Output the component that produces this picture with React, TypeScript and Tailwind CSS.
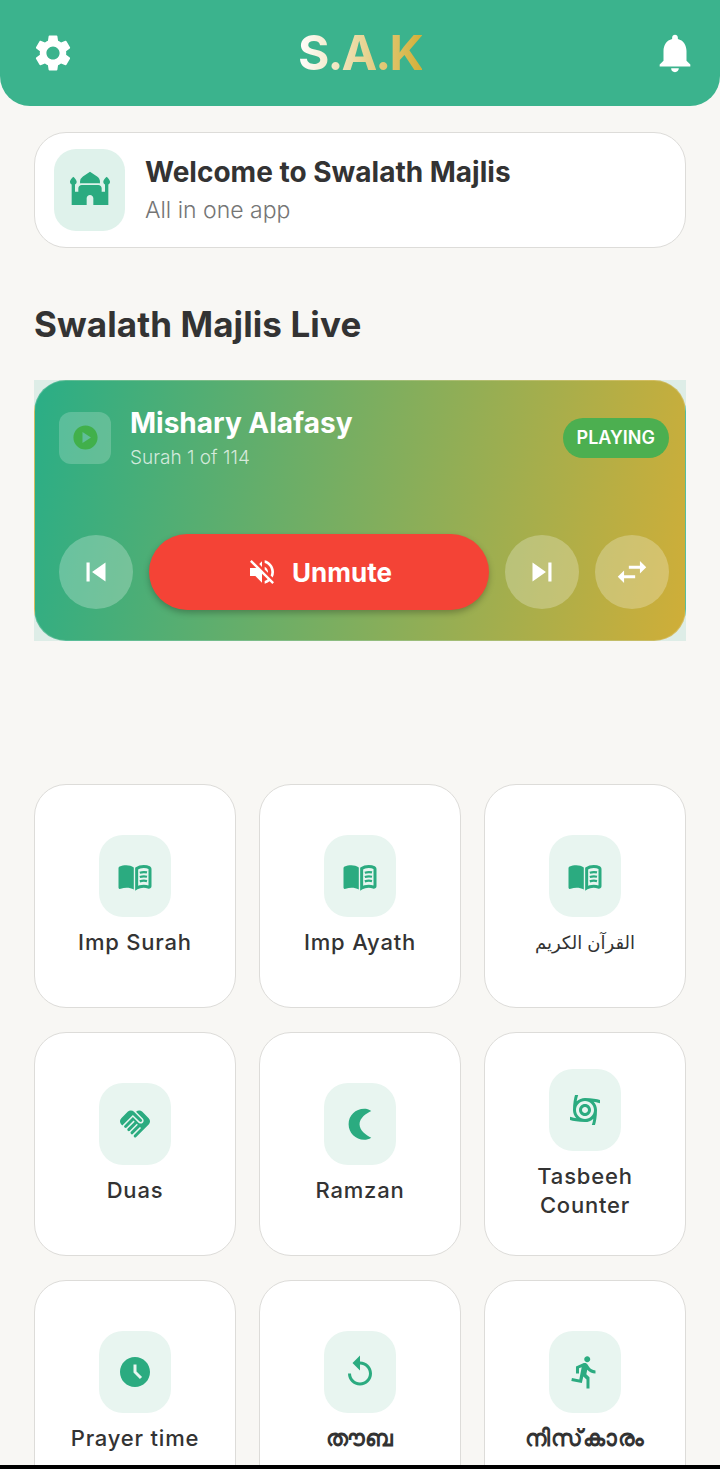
import type { ReactNode } from 'react'
import {
  MdAccessTimeFilled,
  MdCyclone,
  MdDirectionsRun,
  MdHandshake,
  MdMosque,
  MdNotifications,
  MdPlayCircle,
  MdReplay,
  MdSettings,
  MdSkipNext,
  MdSkipPrevious,
  MdSwapHoriz,
  MdVolumeOff,
} from 'react-icons/md'

const iconClass = 'h-[36px] w-[36px] text-[#2bab80]'
const latinLabel = 'text-[22px] font-medium tracking-[0.8px]'
const malayalamLabel = 'text-[23px] font-bold tracking-[0.8px]'
const arabicLabel = 'text-[18px] font-normal'

function BookIcon() {
  return (
    <svg viewBox="0 0 24 24" fill="currentColor" className={iconClass}>
      <path d="M11.2 6.3C9.8 5.3 8 4.8 6.2 4.8c-1.6 0-3.2.3-4.4.9-.5.3-.8.7-.8 1.3v12.6c0 .8.8 1.2 1.5.9 1.2-.5 2.6-.7 3.9-.7 1.7 0 3.4.4 4.8 1.2z" />
      <path
        d="M13.1 7c1.3-.9 3-1.3 4.7-1.3 1.3 0 2.6.2 3.6.7.3.2.6.4.6.8v11.6c0 .5-.5.8-1 .6-1-.4-2.2-.6-3.2-.6-1.7 0-3.4.4-4.7 1.2z"
        fill="none"
        stroke="currentColor"
        strokeWidth="2"
      />
      <path d="M15.2 9.8c1.5-.5 3.2-.6 4.8-.2M15.2 12.7c1.5-.5 3.2-.6 4.8-.2M15.2 15.6c1.5-.5 3.2-.6 4.8-.2" fill="none" stroke="currentColor" strokeWidth="1.5" />
    </svg>
  )
}

function MoonIcon() {
  return (
    <svg viewBox="0 0 24 24" fill="currentColor" className={iconClass}>
      <path d="M19.5 3.3C18 2.3 16.4 1.9 14.8 1.9 9 1.9 4.4 6.4 4.4 12.2s4.6 10.3 10.4 10.3c1.6 0 3.2-.4 4.7-1.4-3.3-1.5-7.8-4.6-7.8-8.9s4.5-7.4 7.8-8.9z" />
    </svg>
  )
}

type Tile = { label: string; icon: ReactNode; labelClass: string }

const tiles: Tile[] = [
  { label: 'Imp Surah', icon: <BookIcon />, labelClass: latinLabel },
  { label: 'Imp Ayath', icon: <BookIcon />, labelClass: latinLabel },
  { label: 'القرآن الكريم', icon: <BookIcon />, labelClass: arabicLabel },
  { label: 'Duas', icon: <MdHandshake className={iconClass} />, labelClass: latinLabel },
  { label: 'Ramzan', icon: <MoonIcon />, labelClass: latinLabel },
  { label: 'Tasbeeh Counter', icon: <MdCyclone className={iconClass} />, labelClass: latinLabel },
  { label: 'Prayer time', icon: <MdAccessTimeFilled className={iconClass} />, labelClass: latinLabel },
  { label: 'തൗബ', icon: <MdReplay className={iconClass} />, labelClass: malayalamLabel },
  { label: 'നിസ്\u200Cകാരം', icon: <MdDirectionsRun className={iconClass} />, labelClass: malayalamLabel },
]

function RoundButton({ children }: { children: ReactNode }) {
  return (
    <button className="flex h-[74px] w-[74px] shrink-0 items-center justify-center rounded-full bg-white/25 text-white">
      {children}
    </button>
  )
}

export default function App() {
  return (
    <div className="flex h-[1469px] w-[720px] flex-col overflow-hidden bg-[#f8f7f4] font-['Inter','Noto_Sans','DejaVu_Sans',sans-serif] text-[#333333]">
      <div className="flex-1 overflow-hidden">
        {/* Header */}
        <header className="flex h-[106px] items-center justify-between rounded-b-[30px] bg-[#3bb38d] pl-[31px] pr-[22px]">
          <MdSettings className="h-[44px] w-[44px] text-white" />
          <h1 className="mr-[7px] bg-[linear-gradient(90deg,#ffffff,#d4af37)] bg-clip-text text-[48px] font-bold tracking-[-2px] text-transparent">
            S.A.K
          </h1>
          <MdNotifications className="h-[46px] w-[46px] text-white" />
        </header>

        <main className="px-[34px] pt-[26px]">
          {/* Welcome card */}
          <section className="flex h-[116px] items-center gap-5 rounded-[32px] border border-[#dddcd9] bg-white pl-[19px]">
            <div className="flex h-[82px] w-[71px] items-center justify-center rounded-[22px] bg-[#dff2eb]">
              <MdMosque className="h-[40px] w-[40px] text-[#2bab80]" />
            </div>
            <div>
              <p className="text-[28px] font-bold leading-[40px]">Welcome to Swalath Majlis</p>
              <p className="text-[23px] font-light leading-[36px] text-[#757575]">All in one app</p>
            </div>
          </section>

          <h2 className="mt-[54px] text-[35px] font-bold leading-[44px] tracking-[0.1px]">Swalath Majlis Live</h2>

          {/* Player */}
          <section className="mt-[34px] h-[261px] bg-[#deede7]">
            <div className="flex h-full flex-col rounded-[32px] border border-[#ffffff30] bg-[linear-gradient(100deg,#2aae86,#d0ae38)] pl-6 pr-4 pt-[22px]">
              <div className="flex items-center">
                <div className="flex h-[52px] w-[52px] items-center justify-center rounded-[12px] bg-white/20">
                  <MdPlayCircle className="h-[29px] w-[29px] text-[#41b04b]" />
                </div>
                <div className="ml-[19px] flex-1">
                  <p className="text-[28px] font-bold leading-[41px] text-white">Mishary Alafasy</p>
                  <p className="text-[19px] font-light leading-[28px] text-white/75">Surah 1 of 114</p>
                </div>
                <span className="rounded-full bg-[#4caf50] px-[14px] py-[9px] text-[18px] font-semibold leading-[22px] text-white">
                  PLAYING
                </span>
              </div>
              <div className="mt-[62px] flex items-center gap-4">
                <RoundButton>
                  <MdSkipPrevious className="h-[38px] w-[38px]" />
                </RoundButton>
                <button className="flex h-[76px] flex-1 items-center justify-center gap-[14px] rounded-full bg-[#f44336] text-[26px] font-bold text-white shadow-[0_3px_6px_rgba(0,0,0,0.25)]">
                  <MdVolumeOff className="h-[32px] w-[32px]" />
                  Unmute
                </button>
                <RoundButton>
                  <MdSkipNext className="h-[38px] w-[38px]" />
                </RoundButton>
                <RoundButton>
                  <MdSwapHoriz className="h-[38px] w-[38px]" />
                </RoundButton>
              </div>
            </div>
          </section>

          {/* Menu grid */}
          <section className="mt-[143px] grid grid-cols-3 gap-x-[23px] gap-y-[24px]">
            {tiles.map((tile) => (
              <div
                key={tile.label}
                className="flex h-[224px] flex-col items-center justify-center rounded-[32px] border border-[#dddcd9] bg-white px-6"
              >
                <div className="flex h-[82px] w-[72px] items-center justify-center rounded-[24px] bg-[#e8f5f0]">
                  {tile.icon}
                </div>
                <p className={`mt-[11px] text-center leading-[29px] ${tile.labelClass}`}>{tile.label}</p>
              </div>
            ))}
          </section>
        </main>
      </div>
      <div className="h-1 shrink-0 bg-black" />
    </div>
  )
}
